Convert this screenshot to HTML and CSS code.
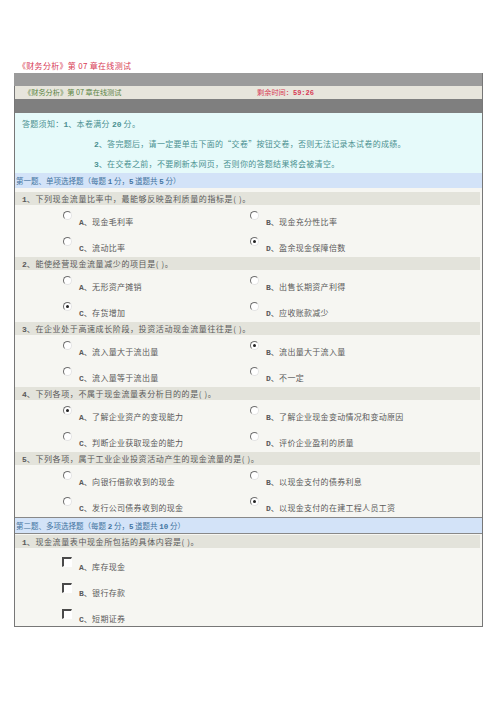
FILE: index.html
```html
<!DOCTYPE html>
<html lang="zh-CN">
  <head>
    <meta charset="UTF-8" />
    <title>《财务分析》第07章在线测试</title>
    <link rel="stylesheet" href="styles.css">
  </head>
  <body>
    <div class="page-title">《财务分析》第 07 章在线测试</div>

    <div class="exam">
      <div class="bar-light"></div>
      <div class="exam-head">
        <span class="exam-name">《财务分析》第 07 章在线测试</span>
        <span class="timer">剩余时间：<b>59:26</b></span>
      </div>
      <div class="bar-dark"></div>

      <div class="notice">
        <p>答题须知：<span class="num">1</span>、本卷满分 <span class="num">20</span> 分。</p>
        <p class="indent"><span class="num">2</span>、答完题后，请一定要单击下面的“交卷”按钮交卷，否则无法记录本试卷的成绩。</p>
        <p class="indent"><span class="num">3</span>、在交卷之前，不要刷新本网页，否则你的答题结果将会被清空。</p>
      </div>

      <div class="section">
        <div class="section-head">第一题、单项选择题（每题 <span class="num">1</span> 分，<span class="num">5</span> 道题共 <span class="num">5</span> 分）</div>
        <div class="section-body">
          <div class="question"><span class="num">1</span>、下列现金流量比率中，最能够反映盈利质量的指标是(&nbsp;)。</div>
          <div class="options">
            <div class="option"><i class="radio"></i><span><b>A</b>、现金毛利率</span></div>
            <div class="option"><i class="radio"></i><span><b>B</b>、现金充分性比率</span></div>
            <div class="option"><i class="radio"></i><span><b>C</b>、流动比率</span></div>
            <div class="option"><i class="radio checked"></i><span><b>D</b>、盈余现金保障倍数</span></div>
          </div>

          <div class="question"><span class="num">2</span>、能使经营现金流量减少的项目是(&nbsp;)。</div>
          <div class="options">
            <div class="option"><i class="radio"></i><span><b>A</b>、无形资产摊销</span></div>
            <div class="option"><i class="radio"></i><span><b>B</b>、出售长期资产利得</span></div>
            <div class="option"><i class="radio checked"></i><span><b>C</b>、存货增加</span></div>
            <div class="option"><i class="radio"></i><span><b>D</b>、应收账款减少</span></div>
          </div>

          <div class="question"><span class="num">3</span>、在企业处于高速成长阶段，投资活动现金流量往往是(&nbsp;)。</div>
          <div class="options">
            <div class="option"><i class="radio"></i><span><b>A</b>、流入量大于流出量</span></div>
            <div class="option"><i class="radio checked"></i><span><b>B</b>、流出量大于流入量</span></div>
            <div class="option"><i class="radio"></i><span><b>C</b>、流入量等于流出量</span></div>
            <div class="option"><i class="radio"></i><span><b>D</b>、不一定</span></div>
          </div>

          <div class="question"><span class="num">4</span>、下列各项，不属于现金流量表分析目的的是(&nbsp;)。</div>
          <div class="options">
            <div class="option"><i class="radio checked"></i><span><b>A</b>、了解企业资产的变现能力</span></div>
            <div class="option"><i class="radio"></i><span><b>B</b>、了解企业现金变动情况和变动原因</span></div>
            <div class="option"><i class="radio"></i><span><b>C</b>、判断企业获取现金的能力</span></div>
            <div class="option"><i class="radio"></i><span><b>D</b>、评价企业盈利的质量</span></div>
          </div>

          <div class="question"><span class="num">5</span>、下列各项，属于工业企业投资活动产生的现金流量的是(&nbsp;)。</div>
          <div class="options">
            <div class="option"><i class="radio"></i><span><b>A</b>、向银行借款收到的现金</span></div>
            <div class="option"><i class="radio"></i><span><b>B</b>、以现金支付的债券利息</span></div>
            <div class="option"><i class="radio"></i><span><b>C</b>、发行公司债券收到的现金</span></div>
            <div class="option"><i class="radio checked"></i><span><b>D</b>、以现金支付的在建工程人员工资</span></div>
          </div>
        </div>
      </div>

      <div class="section">
        <div class="section-head">第二题、多项选择题（每题 <span class="num">2</span> 分，<span class="num">5</span> 道题共 <span class="num">10</span> 分）</div>
        <div class="section-body">
          <div class="question"><span class="num">1</span>、现金流量表中现金所包括的具体内容是(&nbsp;)。</div>
          <div class="checks">
            <div class="check-row"><i class="checkbox"></i><span><b>A</b>、库存现金</span></div>
            <div class="check-row"><i class="checkbox"></i><span><b>B</b>、银行存款</span></div>
            <div class="check-row"><i class="checkbox"></i><span><b>C</b>、短期证券</span></div>
          </div>
        </div>
      </div>
    </div>
  </body>
</html>
```

FILE: styles.css
```css
body {
  margin: 0;
  background: #fff;
  font-family: "Noto Sans CJK SC", "DejaVu Sans", sans-serif;
  font-size: 8px;
  letter-spacing: 0.3px;
  color: #5a5a5a;
}

b,
.num {
  font-family: "Liberation Mono", monospace;
  font-weight: bold;
  letter-spacing: 0;
}

.page-title {
  padding: 60px 0 0 18px;
  height: 12px;
  line-height: 12px;
  font-size: 8px;
  color: #d83a54;
}

.exam {
  margin: 1px 0 0 14px;
  width: 467px;
  border-left: 1px solid #777;
  border-right: 1px solid #777;
  border-bottom: 1px solid #777;
}

.bar-light {
  height: 13px;
  background: #9b9b9b;
  margin-left: -1px;
}

.exam-head {
  display: flex;
  height: 13px;
  line-height: 13px;
  background: #e7e5dc;
  font-size: 7.2px;
  letter-spacing: 0;
}

.exam-name {
  width: 233px;
  padding-left: 9px;
  color: #5a8443;
}

.timer {
  color: #d83a54;
}

.timer b {
  font-size: 7px;
}

.bar-dark {
  height: 14px;
  background: #7f7f7f;
}

.notice {
  height: 59px;
  padding-top: 1px;
  background: #e6fafa;
  color: #4a9090;
}

.notice p {
  margin: 0;
  line-height: 19px;
  padding-left: 7px;
}

.notice .indent {
  padding-left: 79px;
}

.section + .section {
  border-top: 1px solid #888;
}

.section-head {
  height: 15px;
  line-height: 15px;
  padding-left: 1px;
  background: #d3e3f8;
  color: #4273a0;
  font-size: 7.5px;
  letter-spacing: 0;
}

.section + .section .section-head {
  border-bottom: 1px solid #888;
}

.section-body {
  padding: 4px 2px 0 0;
  background: #f6f6f2;
}

.section + .section .section-body {
  padding-top: 1px;
}

.question {
  height: 13px;
  line-height: 13px;
  padding-left: 7px;
  background: #e3e3db;
  letter-spacing: 0.6px;
}

.options {
  display: grid;
  grid-template-columns: 187px 1fr;
  grid-auto-rows: 26px;
  padding-left: 48px;
}

.option,
.check-row {
  display: flex;
  align-items: flex-start;
  gap: 7px;
}

.option span {
  padding-top: 12px;
  line-height: 10px;
}

.radio {
  margin-top: 6px;
  width: 7px;
  height: 7px;
  border-radius: 50%;
  border: 1px solid;
  border-color: #6f6f6f #e4e4e4 #e4e4e4 #6f6f6f;
  background: #fff;
  position: relative;
}

.radio.checked::after {
  content: "";
  position: absolute;
  left: 2px;
  top: 2px;
  width: 3px;
  height: 3px;
  border-radius: 50%;
  background: #222;
}

.checks {
  padding-left: 47px;
}

.check-row {
  height: 26px;
}

.check-row span {
  padding-top: 14px;
  line-height: 10px;
}

.checkbox {
  margin-top: 9px;
  width: 7px;
  height: 7px;
  border: 1px solid;
  border-width: 2px 1px 1px 2px;
  border-color: #4a4a4a #fff #fff #4a4a4a;
  background: #fff;
}
```
